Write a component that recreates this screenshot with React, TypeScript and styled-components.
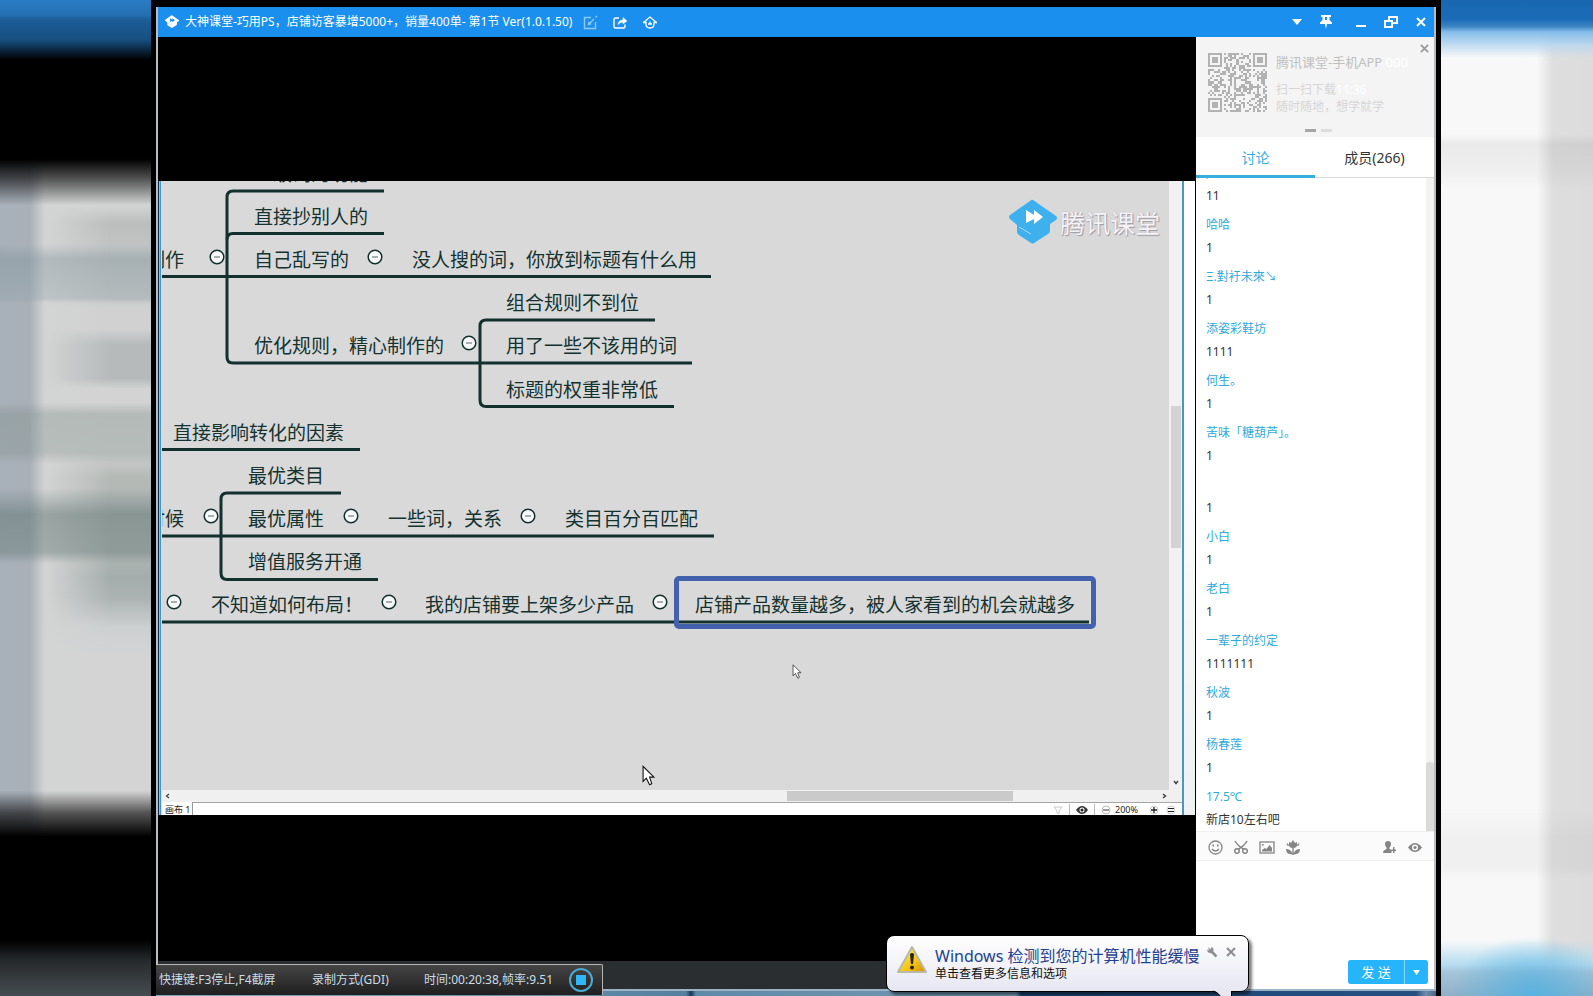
import React from "react";
import styled, { createGlobalStyle } from "styled-components";

const GlobalStyle = createGlobalStyle`
  * { box-sizing: border-box; }
  html, body, #root { height: 100%; margin: 0; }
  body {
    background: #000;
    overflow: hidden;
    font-family: "Noto Sans", "Noto Sans CJK SC", sans-serif;
    font-size: 12px;
    line-height: 16px;
  }
  button { padding: 0; border: 0; background: none; color: inherit; font: inherit; cursor: pointer; }
  svg { display: block; }
`;

/* ---------- page frame ---------- */

const Page = styled.div`
  display: grid;
  grid-template-rows: minmax(0, 1fr);
  grid-template-columns: 151px minmax(0, 1fr) 152px;
  height: 100vh;
`;

const LeftHaze = styled.div`
  background:
    linear-gradient(180deg, #2a7cc4 0%, #2570b3 1.5%, #1b5d98 2%, #174f80 4%, #000 6%, #000 16%,
      rgba(0,0,0,.6) 18%, rgba(0,0,0,0) 20.6%, rgba(0,0,0,0) 79.4%, rgba(0,0,0,.6) 81.6%, #000 84%,
      #000 94.4%, #26292b 96.4%, #454c51 100%),
    linear-gradient(180deg, transparent 24.5%, rgba(122,143,150,.38) 26%, rgba(140,158,165,.3) 30%, transparent 30.4%,
      transparent 40.4%, rgba(122,138,132,.34) 41.6%, rgba(122,138,132,.3) 45.4%, transparent 46.6%,
      transparent 49%, rgba(90,112,110,.48) 51.6%, rgba(100,120,116,.44) 55.4%, transparent 56.6%),
    linear-gradient(90deg, #a8b0b9 0, #a9b0b8 30px, #d3d4d4 45px, transparent 110px),
    linear-gradient(180deg, #d3d4d4 20.6%, #bcbebe 22.4%, #c2c4c4 25%, #c6c8c8 30%, #d1d1d1 31%, #d1d1d1 33%,
      #b6babb 34.6%, #b6babb 38%, #d3d3d3 39%, #d1d2d2 45%, #b4b9b6 48%, #b2b8b6 55%, #a4adac 58%,
      #acb2b2 60%, #cdd0d1 63%, #d4d4d5 66%);
`;

const RightHaze = styled.div`
  background:
    linear-gradient(180deg, #1867b0 0%, #1b6cb8 2%, #3f87c4 2.7%, #84bdea 3.2%, rgba(185,215,240,.8) 4.6%, transparent 5.8%),
    radial-gradient(ellipse 80px 60px at 60% 100%, rgba(85,178,224,.95), transparent),
    linear-gradient(180deg, transparent 94.4%, rgba(176,218,240,.9) 96.8%, #a5c4d8 97.6%, #8fb0c6 100%),
    linear-gradient(180deg, transparent 13.5%, rgba(0,0,0,.06) 14.5%, rgba(0,0,0,.03) 17.5%, transparent 19%,
      transparent 81%, rgba(0,0,0,.03) 84%, rgba(0,0,0,.03) 87%, transparent 88.4%),
    linear-gradient(90deg, #f8f8f8 0, #f8f8f8 96px, #dedede 112px, #dcdcdc 152px);
`;

const Desktop = styled.main`
  position: relative;
  display: flex;
  flex-direction: column;
  min-width: 0;
  padding: 7px 5px 0;
  background: #000;
`;

const Window = styled.section`
  display: flex;
  flex: 1;
  flex-direction: column;
  min-height: 0;
  border: solid #b9bbc1;
  border-width: 0 2px;
`;

const Taskbar = styled.div`
  flex: none;
  height: 7px;
  border-top: 2px solid #9db2c4;
  background: linear-gradient(90deg, #7fa8c4 0, #55819f 530px, #17365c 535px, #5e89a8 540px, #7599b3 860px,
    #1c4475 865px, #24507f calc(100% - 20px), #6f8dab calc(100% - 10px), #42658a 100%);
`;

/* ---------- title bar ---------- */

const TitleBar = styled.header`
  display: flex;
  flex: none;
  align-items: center;
  justify-content: space-between;
  height: 30px;
  padding: 0 5px 0 7px;
  background: #1a8fed;
  color: #fff;
`;

const TitleGroup = styled.div<{ $gap: number }>`
  display: flex;
  align-items: center;
  gap: ${(p) => p.$gap}px;
`;

const Title = styled.h1`
  margin: 0 -4px 0 -8px;
  font-size: 12px;
  font-weight: 400;
  white-space: nowrap;
`;

const BarButton = styled.button`
  display: grid;
  place-items: center;
  width: 16px;
  height: 16px;
`;

/* ---------- video ---------- */

const Body = styled.div`
  display: flex;
  flex: 1;
  min-height: 0;
`;

const VideoColumn = styled.div`
  display: flex;
  flex: 1;
  flex-direction: column;
  min-width: 0;
  padding-right: 1px;
`;

const Stage = styled.div`
  display: flex;
  flex: 1;
  flex-direction: column;
  justify-content: center;
  padding-bottom: 2px;
  background: #000;
`;

const StageFooter = styled.div`
  flex: none;
  height: 28px;
  margin-right: -1px;
  background: #2a2e31;
`;

const Board = styled.div`
  display: flex;
  border-left: 1px solid #10294a;
  background: #fff;
`;

const BoardEdge = styled.div`
  width: 3px;
  background: linear-gradient(90deg, #8cc0dd 1px, #3d95c8 1px, #3d95c8 2px, #c9e6f4 2px);
`;

const BoardMain = styled.div`
  flex: 1;
  min-width: 0;
  border-right: 2px solid #4799b4;
`;

const BoardMargin = styled.div`
  width: 11px;
  background: linear-gradient(180deg, #fff 30%, #eef0f1);
`;

const CanvasRow = styled.div`
  display: flex;
`;

const Canvas = styled.div`
  position: relative;
  flex: 1;
  height: 609px;
  overflow: hidden;
  background: #d9d9da;
  color: #14322f;
`;

const Branches = styled.svg`
  position: absolute;
  inset: 0;
`;

const Topic = styled.div<{ $x: number; $y: number }>`
  position: absolute;
  left: ${(p) => p.$x}px;
  top: ${(p) => p.$y}px;
  font-size: 19px;
  line-height: 24px;
  white-space: nowrap;
`;

const Selection = styled.div`
  position: absolute;
  left: 512px;
  top: 395px;
  width: 422px;
  height: 53px;
  border: 5px solid #4361ad;
  border-radius: 5px;
`;

const Watermark = styled.div`
  position: absolute;
  top: 18px;
  right: 9px;
  display: flex;
  align-items: center;
  gap: 3px;
  color: #f6f3f8;
  font-size: 25px;
  line-height: 36px;
  text-shadow: 1px 1px 1px #9a98a0, 0 0 1px #aaa;
`;

const Pointer = styled.svg<{ $x: number; $y: number }>`
  position: absolute;
  left: ${(p) => p.$x}px;
  top: ${(p) => p.$y}px;
`;

const ScrollColumn = styled.div`
  display: flex;
  flex-direction: column;
  justify-content: space-between;
  align-items: center;
  width: 13px;
  padding-bottom: 2px;
  background: #f1f0f3;
`;

const ScrollThumbV = styled.div`
  width: 10px;
  height: 142px;
  margin-top: 225px;
  background: #d3d3d6;
`;

const ScrollRow = styled.div`
  display: flex;
  align-items: center;
  justify-content: space-between;
  height: 12px;
  padding: 0 15px 0 3px;
  background: #f0f0f1;
`;

const ScrollThumbH = styled.div`
  width: 226px;
  height: 10px;
  margin-left: auto;
  margin-right: 149px;
  background: #cacaca;
`;

const StatusRow = styled.div`
  display: flex;
  height: 13px;
  overflow: hidden;
  background: #fff;
  color: #222;
  font-size: 9px;
  line-height: 16px;
`;

const SheetTab = styled.div`
  width: 31px;
  padding-left: 3px;
  border-right: 1px solid #999;
  white-space: nowrap;
`;

const StatusTools = styled.div`
  display: flex;
  flex: 1;
  align-items: center;
  justify-content: flex-end;
  padding: 2px 6px 0 0;
  border-top: 1px solid #a5a5a5;
`;

const Separator = styled.span`
  width: 1px;
  height: 12px;
  margin: 0 6px;
  background: #bbb;
`;

const Zoom = styled.span`
  width: 38px;
  padding-left: 4px;
`;

/* ---------- side panel ---------- */

const Panel = styled.aside`
  display: flex;
  flex: none;
  flex-direction: column;
  width: 238px;
  background: #fff;
`;

const Promo = styled.div`
  position: relative;
  display: grid;
  flex: none;
  grid-template-columns: 59px 1fr;
  gap: 9px;
  height: 100px;
  padding: 16px 12px 0;
  background: #f4f4f4;
  color: #d6d6d6;
`;

const PromoTitle = styled.div`
  margin-bottom: 10px;
  color: #c0c0c0;
  font-size: 13px;
  line-height: 18px;
  white-space: nowrap;
`;

const PromoLine = styled.div`
  line-height: 17px;
  white-space: nowrap;
`;

const Ghost = styled.span`
  color: #fff;
`;

const PromoClose = styled.button`
  position: absolute;
  top: 7px;
  right: 5px;
`;

const Dots = styled.div`
  position: absolute;
  bottom: 5px;
  left: 109px;
  display: flex;
  gap: 5px;
`;

const Dot = styled.span<{ $on?: boolean }>`
  width: 11px;
  height: 3px;
  background: ${(p) => (p.$on ? "#a6a6a6" : "#dcdcdc")};
`;

const Tabs = styled.div`
  display: flex;
  flex: none;
  height: 41px;
  border-bottom: 1px solid #d8d8d8;
`;

const Tab = styled.button<{ $active?: boolean }>`
  flex: 1;
  height: 41px;
  padding-top: 3px;
  border-bottom: 3px solid ${(p) => (p.$active ? "#36aede" : "transparent")};
  color: ${(p) => (p.$active ? "#36aede" : "#333")};
  font-size: 14px;
`;

const ChatArea = styled.div`
  display: flex;
  flex: 1;
  min-height: 0;
`;

const Messages = styled.ul`
  display: flex;
  flex: 1;
  flex-direction: column;
  justify-content: flex-end;
  gap: 8px;
  margin: 0;
  padding: 0 0 0 10px;
  overflow: hidden;
  list-style: none;
`;

const Message = styled.li`
  flex: none;
  color: #333;
  line-height: 22px;
`;

const Sender = styled.div`
  height: 22px;
  color: #2fabdc;
  line-height: 20px;
`;

const ChatScroll = styled.div`
  display: flex;
  align-items: flex-end;
  width: 8px;
  background: #f2f2f2;
`;

const ChatThumb = styled.div`
  width: 8px;
  height: 69px;
  border-radius: 3px 3px 0 0;
  background: #dadada;
`;

const Tools = styled.div`
  display: flex;
  flex: none;
  align-items: center;
  justify-content: space-between;
  height: 30px;
  padding: 2px 11px 0;
  border: solid #eee;
  border-width: 1px 0;
  background: #fbfbfb;
  color: #858585;
`;

const Composer = styled.div`
  display: flex;
  flex: none;
  flex-direction: column;
  align-items: flex-end;
  height: 128px;
  padding: 0 6px 5px 10px;
`;

const Draft = styled.textarea`
  flex: 1;
  width: 100%;
  border: 0;
  outline: 0;
  resize: none;
  background: transparent;
  font: inherit;
`;

const SendGroup = styled.div`
  display: grid;
  grid-template-columns: 56px 23px;
  gap: 1px;
  height: 24px;
  border-radius: 3px;
  overflow: hidden;
  background: #8bd8ff;
  color: #fff;
`;

const SendButton = styled.button`
  display: grid;
  place-items: center;
  background: #26b4fb;
  font-size: 13px;
`;

/* ---------- overlays ---------- */

const Recorder = styled.div`
  position: absolute;
  left: 5px;
  bottom: 1px;
  display: grid;
  grid-template-columns: 153px 112px 144px 1fr;
  align-items: center;
  width: 447px;
  height: 31px;
  padding-left: 3px;
  border: solid #b5b5b5;
  border-width: 1px 1px 0 0;
  border-radius: 0 2px 0 0;
  background: linear-gradient(180deg, #454545, #1f1f1f);
  color: #cbdde6;
  white-space: nowrap;
`;

const Balloon = styled.div`
  position: absolute;
  right: 192px;
  bottom: 4px;
  display: grid;
  grid-template-columns: 30px 1fr auto;
  gap: 8px;
  width: 363px;
  height: 57px;
  padding: 10px 9px 0 10px;
  border: 1px solid #000;
  border-radius: 8px;
  background: linear-gradient(180deg, #fff, #e6e7f1);
  box-shadow: 3px 3px 3px rgba(0, 0, 0, 0.5);
  color: #111;
`;

const BalloonTitle = styled.div`
  color: #24418f;
  font-size: 16px;
  line-height: 20px;
  white-space: nowrap;
`;

const BalloonActions = styled.div`
  display: flex;
  gap: 3px;
  margin: -2px 0 0 -12px;
  color: #8d8d93;
`;

const Tail = styled.svg`
  position: absolute;
  left: 326px;
  top: 54px;
`;

/* ---------- drawings ---------- */

const Cap = ({ size, eyes }: { size: number; eyes: string }) => (
  <svg width={size} height={size} viewBox="0 0 48 46">
    <path d="M24 0 L47 16 Q49 18 47 20 L41 24 V31 Q41 33 39 34 L25 43 Q24 44 22 43 L10 35 Q8 34 8 32 V25 L1 19 Q-1 17 1 15 L21 1 Q23 -1 24 0Z" fill={eyes === "#fff" ? "#3fb0ee" : "#fff"} />
    <path d="M17 10 L25 15 V10 L34 17 L25 24 V19 L17 23Z" fill={eyes} />
    <path d="M10 27 L22 34" stroke={eyes} strokeWidth="1" opacity=".6" />
  </svg>
);

const Cross = ({ size = 10, width = 2, color = "currentColor" }: { size?: number; width?: number; color?: string }) => (
  <svg width={size} height={size} viewBox="0 0 10 10" stroke={color} strokeWidth={width}>
    <path d="M1 1 L9 9 M9 1 L1 9" />
  </svg>
);

const MODULES = 29;
const qrPath = (() => {
  let seed = 20161;
  let d = "";
  const inFinder = (x: number, y: number) =>
    (x < 8 && y < 8) || (x > MODULES - 9 && y < 8) || (x < 8 && y > MODULES - 9);
  for (let y = 0; y < MODULES; y++) {
    for (let x = 0; x < MODULES; x++) {
      seed = (seed * 1103515245 + 12345) % 2147483648;
      if (!inFinder(x, y) && seed / 2147483648 > 0.48) d += `M${x} ${y}h1v1h-1z`;
    }
  }
  return d;
})();

const QrCode = () => (
  <svg width="59" height="59" viewBox={`0 0 ${MODULES} ${MODULES}`} fill="#b2b2b2" shapeRendering="crispEdges">
    <path d={qrPath} />
    {[[0, 0], [22, 0], [0, 22]].map(([x, y]) => (
      <g key={`${x}-${y}`}>
        <path fillRule="evenodd" d={`M${x} ${y}h7v7h-7z M${x + 1} ${y + 1}v5h5v-5z`} />
        <rect x={x + 2} y={y + 2} width="3" height="3" />
      </g>
    ))}
  </svg>
);

const toggles = [[55, 76], [213, 76], [307, 162], [49, 335], [189, 335], [366, 335], [12, 421], [227, 421], [498, 421]];

const topics: [number, number, string][] = [
  [92, -19, "一级词的功能"],
  [92, 24, "直接抄别人的"],
  [-16, 67, "制作"],
  [92, 67, "自己乱写的"],
  [250, 67, "没人搜的词，你放到标题有什么用"],
  [344, 110, "组合规则不到位"],
  [92, 153, "优化规则，精心制作的"],
  [344, 153, "用了一些不该用的词"],
  [344, 197, "标题的权重非常低"],
  [11, 240, "直接影响转化的因素"],
  [86, 283, "最优类目"],
  [-16, 326, "时候"],
  [86, 326, "最优属性"],
  [226, 326, "一些词，关系"],
  [403, 326, "类目百分百匹配"],
  [86, 369, "增值服务开通"],
  [49, 412, "不知道如何布局！"],
  [263, 412, "我的店铺要上架多少产品"],
  [533, 412, "店铺产品数量越多，被人家看到的机会就越多"],
];

const messages: [string, string][] = [
  [",", "11"],
  ["哈哈", "1"],
  ["Ξ.對衧未來↘", "1"],
  ["添姿彩鞋坊", "1111"],
  ["何生。", "1"],
  ["苦味「糖葫芦」。", "1"],
  ["", "1"],
  ["小白", "1"],
  ["老白", "1"],
  ["一辈子的约定", "1111111"],
  ["秋波", "1"],
  ["杨春莲", "1"],
  ["17.5℃", "新店10左右吧"],
];

const arrowPath = "M1 1 V15 L4 12 L7 18 L9 17 L7 11 H11 Z";

export default function App() {
  return (
    <Page>
      <GlobalStyle />
      <LeftHaze />
      <Desktop>
        <Window>
          <TitleBar>
            <TitleGroup $gap={14}>
              <Cap size={14} eyes="#1a8fed" />
              <Title>大神课堂-巧用PS，店铺访客暴增5000+，销量400单- 第1节 Ver(1.0.1.50)</Title>
              <BarButton aria-label="编辑">
                <svg width="15" height="15" viewBox="0 0 15 15" fill="none" stroke="#8ccbfa" strokeWidth="1.4">
                  <path d="M8 2.5 H1.5 V13.5 H12.5 V7 M6 9 L11 4 M12.5 2.5 L14 1" />
                  <path d="M5.5 9.5 L6 7.6 L7.4 9Z" fill="#8ccbfa" />
                </svg>
              </BarButton>
              <BarButton aria-label="分享">
                <svg width="15" height="13" viewBox="0 0 15 13" fill="none" stroke="#fff" strokeWidth="1.4">
                  <path d="M6 2 H2.5 Q1 2 1 3.5 V10.5 Q1 12 2.5 12 H10.5 Q12 12 12 10.5 V8.5" />
                  <path d="M5 8.5 Q5.5 4 10 4 V1.5 L14 5 L10 8 V6 Q7 6 5 8.5Z" fill="#fff" strokeWidth=".5" />
                </svg>
              </BarButton>
              <BarButton aria-label="主页">
                <svg width="14" height="13" viewBox="0 0 14 13" fill="none" stroke="#fff" strokeWidth="1.3">
                  <path d="M0.5 6.5 L7 1 L13.5 6.5" />
                  <path d="M0 6.500 H3 V8 Q3 12 7 12 Q11 12 11 8 V6.500 H14" />
                  <path d="M5 8 H9 M7 5.500 V8" />
                </svg>
              </BarButton>
            </TitleGroup>
            <TitleGroup $gap={19}>
              <TitleGroup $gap={13}>
                <BarButton aria-label="菜单">
                  <svg width="12" height="6" viewBox="0 0 12 6"><path d="M1 0 H11 L6 6Z" fill="#fff" /></svg>
                </BarButton>
                <BarButton aria-label="置顶">
                  <svg width="12" height="14" viewBox="0 0 12 14" fill="#fff">
                    <path fillRule="evenodd" d="M1 0 H11 V2 H9.500 V5 L12 7.500 V9 H7 L6 14 L5 9 H0 V7.500 L2.500 5 V2 H1Z M5 2 V5 H7 V2Z" />
                  </svg>
                </BarButton>
              </TitleGroup>
              <TitleGroup $gap={14}>
                <BarButton aria-label="最小化">
                  <svg width="10" height="14" viewBox="0 0 10 14"><path d="M0 10 H10 V12 H0Z" fill="#fff" /></svg>
                </BarButton>
                <BarButton aria-label="还原">
                  <svg width="14" height="12" viewBox="0 0 14 12" fill="none" stroke="#fff" strokeWidth="2">
                    <path d="M5 5 V1 H13 V7 H9 M1 5 H8 V11 H1Z" />
                  </svg>
                </BarButton>
                <BarButton aria-label="关闭"><Cross size={10} /></BarButton>
              </TitleGroup>
            </TitleGroup>
          </TitleBar>

          <Body>
            <VideoColumn>
              <Stage>
                <Board>
                  <BoardEdge />
                  <BoardMain>
                    <CanvasRow>
                      <Canvas>
                        <Branches width="1007" height="609" fill="none" stroke="#12302c" strokeWidth="3">
                          <path d="M222 10 H71 Q65 10 65 16 V176 Q65 182 71 182 H530" />
                          <path d="M222 52.500 H71 Q65 52.500 65 58.500" />
                          <path d="M0 95.500 H549" />
                          <path d="M493 139 H324 Q318 139 318 145 V219 Q318 225.500 324 225.500 H512" />
                          <path d="M0 268.500 H198" />
                          <path d="M179 312 H65 Q59 312 59 318 V392 Q59 398.500 65 398.500 H216" />
                          <path d="M0 355 H552" />
                          <path d="M0 441 H927" />
                          <g strokeWidth="1.5">
                            {toggles.map(([x, y]) => (
                              <g key={`${x}-${y}`}>
                                <circle cx={x} cy={y} r="6.800" fill="#f8f8f8" />
                                <path d={`M${x - 3} ${y}h6`} strokeWidth="1" opacity=".7" />
                              </g>
                            ))}
                          </g>
                        </Branches>
                        {topics.map(([x, y, label]) => (
                          <Topic key={label} $x={x} $y={y}>{label}</Topic>
                        ))}
                        <Selection />
                        <Watermark><Cap size={48} eyes="#fff" />腾讯课堂</Watermark>
                        <Pointer $x={630} $y={483} width="10" height="15" viewBox="0 0 12 19" fill="#fff" stroke="#333" strokeWidth="1"><path d={arrowPath} /></Pointer>
                        <Pointer $x={480} $y={584} width="13" height="21" viewBox="0 0 12 19" fill="#fff" stroke="#111" strokeWidth="1"><path d={arrowPath} /></Pointer>
                      </Canvas>
                      <ScrollColumn>
                        <ScrollThumbV />
                        <svg width="6" height="8" viewBox="0 0 6 8" fill="none" stroke="#444" strokeWidth="1.5"><path d="M1 1 L3 3.500 L5 1" /></svg>
                      </ScrollColumn>
                    </CanvasRow>
                    <ScrollRow>
                      <svg width="5" height="6" viewBox="0 0 5 6" fill="none" stroke="#444" strokeWidth="1.3"><path d="M4 1 L1.500 3 L4 5" /></svg>
                      <ScrollThumbH />
                      <svg width="5" height="6" viewBox="0 0 5 6" fill="none" stroke="#444" strokeWidth="1.5"><path d="M1 1 L3.500 3 L1 5" /></svg>
                    </ScrollRow>
                    <StatusRow>
                      <SheetTab>画布 1</SheetTab>
                      <StatusTools>
                        <svg width="10" height="9" viewBox="0 0 10 9" fill="none" stroke="#c9c9c9"><path d="M1 1 H9 L6 5 V8 L4 7 V5Z" /></svg>
                        <Separator />
                        <svg width="12" height="8" viewBox="0 0 12 8"><path d="M0 4 Q6 -4 12 4 Q6 12 0 4Z" fill="#333" /><circle cx="6" cy="4" r="2.500" fill="#fff" /><circle cx="6" cy="4" r="1.500" fill="#222" /></svg>
                        <Separator />
                        <svg width="10" height="10" viewBox="0 0 10 10" fill="none" stroke="#bbb"><circle cx="5" cy="5" r="4" /><path d="M2 5 H8" stroke="#333" /></svg>
                        <Zoom>200%</Zoom>
                        <svg width="27" height="10" viewBox="0 0 27 10" fill="none" stroke="#ccc"><circle cx="5" cy="5" r="4" /><path d="M2 5 H8 M5 2 V8" stroke="#222" strokeWidth="1.300" /><circle cx="22" cy="5" r="4" /><path d="M19 3.500 H25 M19 6.500 H25" stroke="#222" /></svg>
                      </StatusTools>
                    </StatusRow>
                  </BoardMain>
                  <BoardMargin />
                </Board>
              </Stage>
              <StageFooter />
            </VideoColumn>

            <Panel>
              <Promo>
                <QrCode />
                <div>
                  <PromoTitle>腾讯课堂-手机APP <Ghost>000</Ghost></PromoTitle>
                  <PromoLine>扫一扫下载<Ghost>11:36</Ghost></PromoLine>
                  <PromoLine>随时随地，想学就学</PromoLine>
                </div>
                <PromoClose aria-label="关闭广告"><Cross size={9} color="#999" /></PromoClose>
                <Dots><Dot $on /><Dot /></Dots>
              </Promo>
              <Tabs>
                <Tab $active>讨论</Tab>
                <Tab>成员(266)</Tab>
              </Tabs>
              <ChatArea>
                <Messages>
                  {messages.map(([sender, body], i) => (
                    <Message key={i}>
                      <Sender>{sender}</Sender>
                      {body}
                    </Message>
                  ))}
                </Messages>
                <ChatScroll><ChatThumb /></ChatScroll>
              </ChatArea>
              <Tools>
                <TitleGroup $gap={10}>
                  <BarButton aria-label="表情">
                    <svg width="15" height="15" viewBox="0 0 15 15" fill="none" stroke="currentColor" strokeWidth="1.3">
                      <circle cx="7.500" cy="7.500" r="6.500" /><path d="M4 9 Q7.500 13 11 9" />
                      <path d="M5.200 4.500 V6.500 M9.800 4.500 V6.500" strokeWidth="1.600" />
                    </svg>
                  </BarButton>
                  <BarButton aria-label="截图">
                    <svg width="14" height="14" viewBox="0 0 14 14" fill="none" stroke="currentColor" strokeWidth="1.500">
                      <path d="M1 1 Q3 5 10 9.500 M13 1 Q11 5 4 9.500" /><circle cx="3" cy="11" r="2.300" /><circle cx="11" cy="11" r="2.300" />
                    </svg>
                  </BarButton>
                  <BarButton aria-label="图片">
                    <svg width="16" height="13" viewBox="0 0 16 13" fill="none" stroke="currentColor" strokeWidth="1.300">
                      <rect x="1" y="1" width="14" height="11" /><path d="M3 10.500 V9 L6 7 L7.500 8 L10.500 4 L13 7 V10.500Z" fill="currentColor" strokeWidth="0" /><rect x="3.200" y="3.200" width="1.200" height="1.200" fill="currentColor" strokeWidth=".5" />
                    </svg>
                  </BarButton>
                  <BarButton aria-label="送花">
                    <svg width="14" height="15" viewBox="0 0 14 15" fill="currentColor">
                      <path d="M3 2 L5 3 L7 0 L9 3 L11 2 V5 Q11 8 7 8 Q3 8 3 5Z M1 3 Q3 4 3 6 Q0 6 1 3Z M13 3 Q11 4 11 6 Q14 6 13 3Z M6.300 8 H7.700 V15 H6.300Z M0 9 Q5 9 6.500 14 Q0 15 0 9Z M14 9 Q9 9 7.500 14 Q14 15 14 9Z" />
                    </svg>
                  </BarButton>
                </TitleGroup>
                <TitleGroup $gap={10}>
                  <BarButton aria-label="邀请">
                    <svg width="13" height="13" viewBox="0 0 13 13" fill="currentColor">
                      <path d="M5 0 Q8 0 8 3 Q8 5.500 6.500 6.500 V8 Q8 8.500 8.500 9 V12 H0 Q0 9 3.500 8 V6.500 Q2 5.500 2 3 Q2 0 5 0Z M10 6 H11.500 V8.500 H13 V10 H11.500 V12 H10 V10 H8.500 V8.500 H10Z" />
                    </svg>
                  </BarButton>
                  <BarButton aria-label="查看">
                    <svg width="14" height="9" viewBox="0 0 14 9" fill="currentColor">
                      <path fillRule="evenodd" d="M0 4.500 Q7 -4.500 14 4.500 Q7 13.500 0 4.500Z M7 1.500 A3 3 0 1 0 7 7.500 A3 3 0 1 0 7 1.500Z" /><circle cx="7" cy="4.500" r="1.600" />
                    </svg>
                  </BarButton>
                </TitleGroup>
              </Tools>
              <Composer>
                <Draft aria-label="输入消息" />
                <SendGroup>
                  <SendButton>发 送</SendButton>
                  <SendButton aria-label="发送选项">
                    <svg width="7" height="5" viewBox="0 0 7 5"><path d="M0 0 H7 L3.500 5Z" fill="#fff" /></svg>
                  </SendButton>
                </SendGroup>
              </Composer>
            </Panel>
          </Body>
        </Window>
        <Taskbar />

        <Recorder>
          <span>快捷键:F3停止,F4截屏</span>
          <span>录制方式(GDI)</span>
          <span>时间:00:20:38,帧率:9.51</span>
          <button aria-label="停止录制">
            <svg width="26" height="26" viewBox="0 0 26 26" fill="none" stroke="#4fa8d0" strokeWidth="2">
              <circle cx="13" cy="13" r="11" /><rect x="8" y="8" width="10" height="10" fill="#2fb8f5" stroke="none" />
            </svg>
          </button>
        </Recorder>

        <Balloon role="alert">
          <svg width="30" height="28" viewBox="0 0 30 28">
            <defs>
              <linearGradient id="warn" x1="0" y1="0" x2="1" y2="1">
                <stop offset="0" stopColor="#fff36a" /><stop offset=".6" stopColor="#f5c414" /><stop offset="1" stopColor="#d98c00" />
              </linearGradient>
            </defs>
            <path d="M15 1 L29 26 H1Z" fill="url(#warn)" stroke="#b9b9a8" strokeWidth="2" strokeLinejoin="round" />
            <path d="M13 8 Q15 6 17 8 L16 18 H14Z" fill="#222" /><circle cx="15" cy="21.500" r="2" fill="#222" />
          </svg>
          <div>
            <BalloonTitle>Windows 检测到您的计算机性能缓慢</BalloonTitle>
            <div>单击查看更多信息和选项</div>
          </div>
          <BalloonActions>
            <BarButton aria-label="选项">
              <svg width="11" height="11" viewBox="0 0 11 11">
                <path d="M5 5 L9.500 9.500" stroke="currentColor" strokeWidth="2.500" />
                <path d="M1 0 L3.500 2.500 L4.500 0 Q7 1 6.500 4 Q5 7 2.500 6 Q0 5 0 2.500 L2 3.500Z" fill="currentColor" />
              </svg>
            </BarButton>
            <BarButton aria-label="关闭通知"><Cross size={10} /></BarButton>
          </BalloonActions>
          <Tail width="20" height="8" viewBox="0 0 20 8">
            <path d="M0 0 Q5 2 9 8 H18 V0Z" fill="#e6e7f1" /><path d="M0 1 Q5 2 9 8 M18.500 1 V8" fill="none" stroke="#000" />
          </Tail>
        </Balloon>
      </Desktop>
      <RightHaze />
    </Page>
  );
}
